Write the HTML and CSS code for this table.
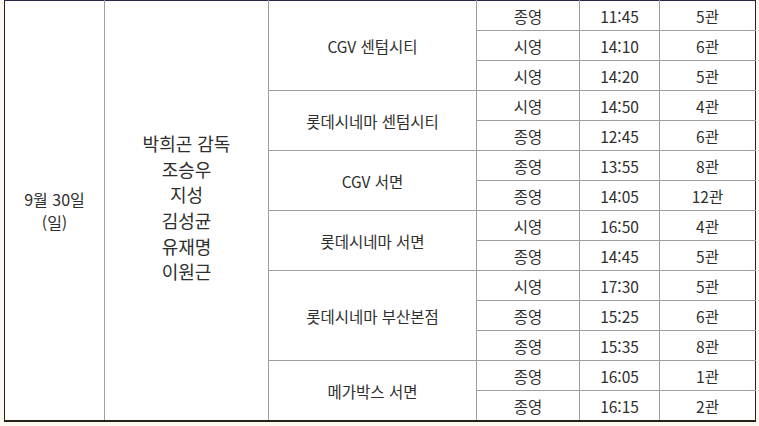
FILE: index.html
```html
<!DOCTYPE html>
<html lang="ko">
<head>
<meta charset="utf-8">
<link rel="stylesheet" href="styles.css">
</head>
<body>
<table class="schedule">
  <colgroup>
    <col class="c-date"><col class="c-cast"><col class="c-theater"><col class="c-type"><col class="c-time"><col class="c-hall">
  </colgroup>
  <tbody>
    <tr>
      <td rowspan="14" class="date">9월 30일<br>(일)</td>
      <td rowspan="14" class="cast">박희곤 감독<br>조승우<br>지성<br>김성균<br>유재명<br>이원근</td>
      <td rowspan="3">CGV 센텀시티</td>
      <td>종영</td><td>11:45</td><td>5관</td>
    </tr>
    <tr><td>시영</td><td>14:10</td><td>6관</td></tr>
    <tr><td>시영</td><td>14:20</td><td>5관</td></tr>
    <tr><td rowspan="2">롯데시네마 센텀시티</td><td>시영</td><td>14:50</td><td>4관</td></tr>
    <tr><td>종영</td><td>12:45</td><td>6관</td></tr>
    <tr><td rowspan="2">CGV 서면</td><td>종영</td><td>13:55</td><td>8관</td></tr>
    <tr><td>종영</td><td>14:05</td><td>12관</td></tr>
    <tr><td rowspan="2">롯데시네마 서면</td><td>시영</td><td>16:50</td><td>4관</td></tr>
    <tr><td>종영</td><td>14:45</td><td>5관</td></tr>
    <tr><td rowspan="3">롯데시네마 부산본점</td><td>시영</td><td>17:30</td><td>5관</td></tr>
    <tr><td>종영</td><td>15:25</td><td>6관</td></tr>
    <tr><td>종영</td><td>15:35</td><td>8관</td></tr>
    <tr><td rowspan="2">메가박스 서면</td><td>종영</td><td>16:05</td><td>1관</td></tr>
    <tr><td>종영</td><td>16:15</td><td>2관</td></tr>
  </tbody>
</table>
</body>
</html>
```
FILE: styles.css
```css
html, body {
  margin: 0;
  padding: 0;
  background: #fcf8ef;
}
body {
  padding-left: 4px;
  font-family: "Noto Sans CJK KR", "Noto Sans", sans-serif;
  font-size: 15.5px;
  color: #2e2e2e;
}
.schedule {
  width: 751px;
  border-collapse: collapse;
  table-layout: fixed;
  background: #ffffff;
  border-top: 1px solid #2e2346;
  border-left: 1px solid #2a2216;
  border-right: 1px solid #2a2216;
  border-bottom: 2px solid #2a2216;
}
.c-date { width: 100px; }
.c-cast { width: 164px; }
.c-theater { width: 208px; }
.c-type { width: 103px; }
.c-time { width: 80px; }
.c-hall { width: 96px; }
.schedule td {
  border: 1px solid #9e9e9e;
  height: 29px;
  padding: 0;
  text-align: center;
  vertical-align: middle;
  line-height: 20px;
}
.schedule td.date {
  border-left: 1px solid #2a2216;
  font-size: 16px;
  line-height: 23px;
}
.schedule td.cast {
  font-size: 18px;
  line-height: 25.6px;
  padding-bottom: 5px;
}
.schedule tr:first-child td {
  border-top: 1px solid #2e2346;
}
.schedule tr td:last-child {
  border-right: 1px solid #2a2216;
}
.schedule tr:last-child td,
.schedule td.date,
.schedule td.cast {
  border-bottom: 2px solid #2a2216;
}
```
